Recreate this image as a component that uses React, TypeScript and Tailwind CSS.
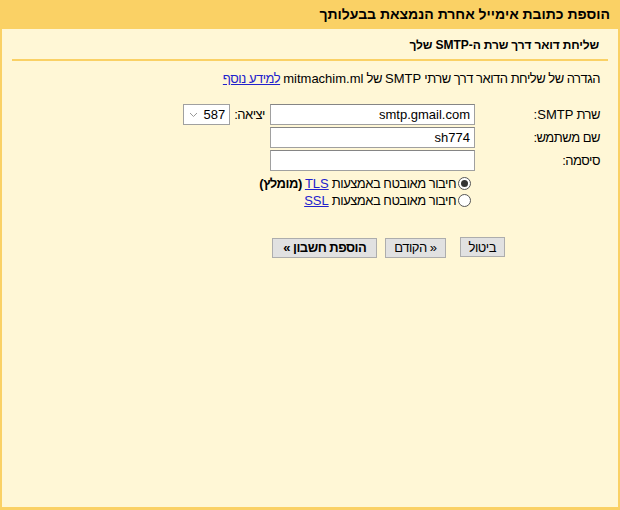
import React from 'react'

const font = { fontFamily: '"Liberation Sans", Arial, sans-serif' }

function Latin({ children }: { children: React.ReactNode }) {
    return <span className="tracking-normal">{children}</span>
}

function Field({ value }: { value?: string }) {
    return (
        <div className="w-[205px] h-[21px] bg-white border border-[#a0a0a0] border-t-[#858585] flex items-center px-[4px] text-[13px] tracking-normal text-black">
            {value}
        </div>
    )
}

function Radio({ checked }: { checked?: boolean }) {
    return (
        <span className="w-[13px] h-[13px] rounded-full border border-[#555] bg-white flex items-center justify-center shrink-0">
            {checked && <span className="w-[7px] h-[7px] rounded-full bg-[#333]" />}
        </span>
    )
}

function Btn({ children, bold }: { children: React.ReactNode; bold?: boolean }) {
    return (
        <button className={`h-[20px] text-[13px] leading-none border border-[#adadad] bg-[#e1e1e1] text-black ${bold ? 'font-bold px-[10px]' : 'px-[8px]'}`}>
            {children}
        </button>
    )
}

export default function App() {
    return (
        <div dir="rtl" style={font} className="w-[620px] h-[510px] bg-[#fad165] flex flex-col text-black tracking-[-0.5px]">
            <div className="h-[29px] pr-[10px] flex items-center text-[14px] font-bold tracking-normal">
                הוספת כתובת אימייל אחרת הנמצאת בבעלותך
            </div>
            <div className="flex-1 mx-[2px] mb-[3px] bg-[#fff7d6] flex flex-col">
                <div className="mx-[10px] border-b-2 border-[#fad165] h-[32px] pr-[9px] flex items-center text-[12px] font-bold tracking-[-0.15px] pt-[1px]">
                    <span>
                        שליחת דואר דרך שרת ה-<Latin>SMTP</Latin> שלך
                    </span>
                </div>
                <div className="pr-[18px] mt-[10px] text-[13px] leading-[16px]">
                    הגדרה של שליחת הדואר דרך שרתי <Latin>SMTP</Latin> של <Latin>mitmachim.ml</Latin>{' '}
                    <a href="#" className="text-[#2222cc] underline">למידע נוסף</a>
                </div>

                <div className="pr-[18px] mt-[17px] flex flex-col gap-[2px] text-[13px]">
                    <div className="flex items-center">
                        <div className="w-[125px] pt-[1px]">שרת <Latin>SMTP:</Latin></div>
                        <Field value="smtp.gmail.com" />
                        <div className="mr-[5px] ml-[4px]">יציאה:</div>
                        <div className="w-[47px] h-[21px] bg-white border border-[#a0a0a0] flex items-center justify-between px-[4px] tracking-normal">
                            <span>587</span>
                            <svg width="9" height="6" viewBox="0 0 9 6" className="ml-[1px]">
                                <path d="M1 1 L4.5 4.5 L8 1" fill="none" stroke="#999" strokeWidth="1" />
                            </svg>
                        </div>
                    </div>
                    <div className="flex items-center">
                        <div className="w-[125px]">שם משתמש:</div>
                        <Field value="sh774" />
                    </div>
                    <div className="flex items-center">
                        <div className="w-[125px]">סיסמה:</div>
                        <Field />
                    </div>
                    <div className="flex flex-col mt-[4px] gap-[4px] pr-[129px]">
                        <div className="flex items-center gap-[2px] h-[13px]">
                            <Radio checked />
                            <span>
                                חיבור מאובטח באמצעות <a href="#" className="text-[#2222cc] underline tracking-normal">TLS</a> <b>(מומלץ)</b>
                            </span>
                        </div>
                        <div className="flex items-center gap-[2px] h-[13px]">
                            <Radio />
                            <span>
                                חיבור מאובטח באמצעות <a href="#" className="text-[#2222cc] underline tracking-normal">SSL</a>
                            </span>
                        </div>
                    </div>
                </div>

                <div className="mt-[28px] pr-[113px] flex items-center">
                    <Btn>ביטול</Btn>
                    <div className="mr-[14px]">
                        <Btn>« הקודם</Btn>
                    </div>
                    <div className="mr-[8px]">
                        <Btn bold>הוספת חשבון »</Btn>
                    </div>
                </div>
            </div>
        </div>
    )
}
